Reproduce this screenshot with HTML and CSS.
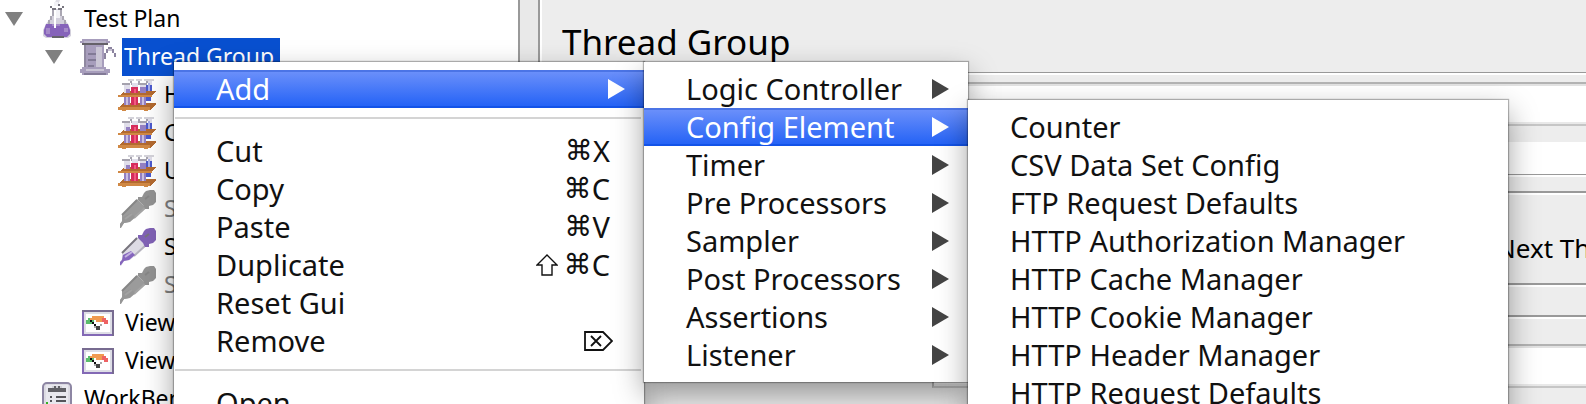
FILE: index.html
```html
<!DOCTYPE html>
<html lang="en">
<head>
<meta charset="utf-8">
<title>Test Plan</title>
<link rel="stylesheet" href="styles.css">
</head>
<body>
<svg class="defs" aria-hidden="true">
  <symbol id="twisty" viewBox="0 0 18 14"><path d="M0 0h18L9 14z" fill="#808080"/></symbol>
  <symbol id="arrow" viewBox="0 0 17 20"><path d="M0 0L17 10L0 20z" fill="currentColor"/></symbol>
  <symbol id="flask" viewBox="0 0 30 38">
    <path d="M14 0h4l-2 5h-4z" fill="#dedde4"/>
    <path d="M10 9h10v7l6 8 3 6v6l-3 2H4l-3-2v-6l3-6 6-8z" fill="#d3d0dc"/>
    <path d="M4 24h22l2 6v4l-3 3H5l-3-3v-4z" fill="#8663ba"/>
    <g shape-rendering="crispEdges">
      <path d="M8 6h2v2H8zM10 8h4v2h-4zM16 8h4v2h-4zM20 6h2v2h-2zM12 4h6v2h-6z" fill="#77757f"/>
      <path d="M12 2h4v4h-4zM14 10h4v8h-4z" fill="#f2f2f6"/>
      <path d="M10 10h2v6h-2zM8 16h2v4H8zM6 20h2v4H6zM18 10h2v6h-2zM20 16h2v4h-2zM22 20h2v4h-2z" fill="#aaa7b3"/>
      <path d="M4 28h4v6H4zM10 24h8v2h-8zM22 28h4v4h-4z" fill="#a58ac9"/>
      <path d="M12 10h2v18h-2z" fill="#fff"/>
      <path d="M10 36h12v2H10z" fill="#66636c"/>
    </g>
  </symbol>
  <symbol id="beaker" viewBox="0 0 36 36" shape-rendering="crispEdges">
    <path d="M2 0h26v2h2v2h-4v2h-2v22h2v2h4v4h-2v2H2v-2H0v-4h2v-2h2V6H2V4H0V2h2z" fill="#a79dbc"/>
    <path d="M4 2h22v2H4z" fill="#bab4ca"/>
    <path d="M2 4h26v2H2z" fill="#656169"/>
    <path d="M16 8h6v20h-6zM6 30h18v2H6z" fill="#cac5d5"/>
    <path d="M4 6h2v22H4z" fill="#8f88a0"/>
    <path d="M8 14h8v2H8zM8 20h8v2H8zM8 26h6v2H8zM4 34h22v2H4z" fill="#827a96"/>
    <path d="M28 8h4v2h-4zM26 10h2v4h-2zM32 10h2v4h-2zM34 14h2v4h-2zM24 14h2v6h-2z" fill="#8d85a0"/>
    <path d="M28 10h4v2h-4z" fill="#c8c3d2"/>
  </symbol>
  <symbol id="rack" viewBox="0 0 38 32" shape-rendering="crispEdges">
    <path d="M6 12h32l-6 6H0zM6 24h32v2l-6 5H0v-2z" fill="#b36a30"/>
    <path d="M0 16h34v2H0zM0 28h32v3H0zM4 30h4v2H4zM26 30h4v2h-4z" fill="#d08844"/>
    <path d="M10 0h6v2h-6zM18 0h6v2h-6zM26 0h10v2H26z" fill="#d4d3da"/>
    <path d="M4 4h8v2H4zM13 4h8v2h-8zM21 4h8v2h-8zM12 2h2v2h-2zM20 2h2v2h-2zM28 2h2v2h-2z" fill="#a5a2ae"/>
    <path d="M6 6h6v8H6zM14 4h6v4h-6zM22 6h6v6h-6zM30 2h4v4h-4z" fill="#e0deea"/>
    <path d="M8 10h4v4H8zM6 18h6v8H6zM22 8h6v6h-6zM22 18h6v8h-6z" fill="#9480c2"/>
    <path d="M8 18h2v8H8zM24 18h2v8h-2z" fill="#c9bfe2"/>
    <path d="M13 8h7v6h-7zM13 18h7v8h-7z" fill="#d62c5c"/>
    <path d="M16 10h2v4h-2zM16 18h2v8h-2z" fill="#ef5a80"/>
    <path d="M28 6h6v6h-6zM28 18h5v4h-5z" fill="#4b59cc"/>
    <path d="M30 4h2v8h-2z" fill="#a9b0e8"/>
  </symbol>
  <symbol id="dropper" viewBox="0 0 36 38">
    <path d="M17 9l9 9L10 32l-6 1-3 5H0v-4l2-3v-6z" fill="var(--glass)"/>
    <path d="M2 25L17 10" fill="none" stroke="var(--shade)" stroke-width="2"/>
    <path d="M26 17L14 28" fill="none" stroke="var(--edge)" stroke-width="2"/>
    <path d="M3 27l8-4 4 4-6 5-5 1-3 4H0v-3l2-2z" fill="var(--liquid)"/>
    <path d="M5 29l7-5" stroke="var(--light)" stroke-width="2"/>
    <path d="M26 1l4-1h4l2 3v9l-3 3-4 1v3h-4l-2-4-5-5V7h4l2-4z" fill="var(--bulb)"/>
    <path d="M25 9l4-3" stroke="var(--shade)" stroke-width="2"/>
  </symbol>
  <symbol id="gauge" viewBox="0 0 32 26" shape-rendering="crispEdges">
    <path d="M0 0h32v26H0z" fill="#8369b5"/><path d="M0 0h32v2H0zM30 0h2v26h-2z" fill="#776b90"/>
    <path d="M2 2h28v22H2z" fill="#dedee6"/><path d="M4 4h24v18H4z" fill="#fff"/>
    <path d="M4 10h2V8h4v2h2v4H4z" fill="#5bbd6c"/>
    <path d="M8 8h2V6h12v2h2v2h-4v2h-6v-2H8z" fill="#f09a50"/>
    <path d="M20 8h4v2h2v4h-4v-2h-2z" fill="#ee6264"/>
    <path d="M8 10h2v2H8zM10 12h2v2h-2zM12 14h2v2h-2z" fill="#111"/>
    <path d="M14 16h4v4h-4z" fill="#444"/><path d="M18 14h2v2h-2zM12 16h2v2h-2z" fill="#aaa"/>
  </symbol>
  <symbol id="clipboard" viewBox="0 0 30 38">
    <rect x="1" y="3" width="28" height="40" rx="4" fill="#dcdbe3" stroke="#8d86a3" stroke-width="2"/>
    <path d="M4 5h22v33H4z" fill="#e8e8ee"/>
    <g shape-rendering="crispEdges"><path d="M6 8h4V6h10v2h4v4H6z" fill="#606066"/><path d="M10 6h2v2h-2zM14 6h2v2h-2zM18 6h2v2h-2z" fill="#d0d0d6"/>
    <path d="M8 16h2v2H8zM14 16h10v2H14zM8 20h2v2H8zM14 20h10v2H14z" fill="#55555a"/><path d="M4 22h2v4H4z" fill="#34b324"/></g>
  </symbol>
</svg>
<div class="app">
  <nav class="tree" aria-label="Test plan tree">
    <div class="node"><svg class="twisty"><use href="#twisty"/></svg><svg class="icon tall"><use href="#flask"/></svg><span class="name">Test Plan</span></div>
    <div class="node level-1"><svg class="twisty"><use href="#twisty"/></svg><svg class="icon beaker"><use href="#beaker"/></svg><span class="name selected">Thread Group</span></div>
    <div class="node level-2"><svg class="icon rack"><use href="#rack"/></svg><span class="name">H</span></div>
    <div class="node level-2"><svg class="icon rack"><use href="#rack"/></svg><span class="name">C</span></div>
    <div class="node level-2"><svg class="icon rack"><use href="#rack"/></svg><span class="name">U</span></div>
    <div class="node level-2 disabled"><svg class="icon dropper"><use href="#dropper"/></svg><span class="name">S</span></div>
    <div class="node level-2"><svg class="icon dropper"><use href="#dropper"/></svg><span class="name">S</span></div>
    <div class="node level-2 disabled"><svg class="icon dropper"><use href="#dropper"/></svg><span class="name">S</span></div>
    <div class="node level-1 leaf"><svg class="icon gauge"><use href="#gauge"/></svg><span class="name">View</span></div>
    <div class="node level-1 leaf"><svg class="icon gauge"><use href="#gauge"/></svg><span class="name">View</span></div>
    <div class="node leaf"><svg class="icon tall"><use href="#clipboard"/></svg><span class="name">WorkBench</span></div>
  </nav>
  <div class="divider"></div>
  <main class="panel">
    <h1 class="title">Thread Group</h1>
    <input class="field" type="text" aria-label="Name">
    <div class="comments"></div>
    <section class="group action"><span class="choice">Next Th</span></section>
    <section class="properties"><input class="field" type="text" aria-label="Number of threads"></section>
  </main>
</div>

<div class="menu menu-main" role="menu">
  <button class="item active" role="menuitem">Add<svg class="arrow"><use href="#arrow"/></svg></button>
  <hr class="separator">
  <button class="item" role="menuitem">Cut<span class="keys"><span class="sign">⌘</span>X</span></button>
  <button class="item" role="menuitem">Copy<span class="keys"><span class="sign">⌘</span>C</span></button>
  <button class="item" role="menuitem">Paste<span class="keys"><span class="sign">⌘</span>V</span></button>
  <button class="item" role="menuitem">Duplicate<span class="keys"><svg class="shift" viewBox="0 0 22 22" role="img" aria-label="Shift"><path d="M11 1L21 11H16V21H6V11H1z" fill="none" stroke="currentColor" stroke-width="1.4"/></svg><span class="sign">⌘</span>C</span></button>
  <button class="item" role="menuitem">Reset Gui</button>
  <button class="item" role="menuitem">Remove<svg class="delete" viewBox="0 0 29 20" role="img" aria-label="Delete"><path d="M1 1H19L28 10L19 19H1zM7 5L17 15M17 5L7 15" fill="none" stroke="currentColor" stroke-width="1.8"/></svg></button>
  <hr class="separator">
  <button class="item" role="menuitem">Open...</button>
</div>

<div class="menu menu-add" role="menu">
  <button class="item" role="menuitem">Logic Controller<svg class="arrow"><use href="#arrow"/></svg></button>
  <button class="item active" role="menuitem">Config Element<svg class="arrow"><use href="#arrow"/></svg></button>
  <button class="item" role="menuitem">Timer<svg class="arrow"><use href="#arrow"/></svg></button>
  <button class="item" role="menuitem">Pre Processors<svg class="arrow"><use href="#arrow"/></svg></button>
  <button class="item" role="menuitem">Sampler<svg class="arrow"><use href="#arrow"/></svg></button>
  <button class="item" role="menuitem">Post Processors<svg class="arrow"><use href="#arrow"/></svg></button>
  <button class="item" role="menuitem">Assertions<svg class="arrow"><use href="#arrow"/></svg></button>
  <button class="item" role="menuitem">Listener<svg class="arrow"><use href="#arrow"/></svg></button>
</div>

<div class="menu menu-config" role="menu">
  <button class="item" role="menuitem">Counter</button>
  <button class="item" role="menuitem">CSV Data Set Config</button>
  <button class="item" role="menuitem">FTP Request Defaults</button>
  <button class="item" role="menuitem">HTTP Authorization Manager</button>
  <button class="item" role="menuitem">HTTP Cache Manager</button>
  <button class="item" role="menuitem">HTTP Cookie Manager</button>
  <button class="item" role="menuitem">HTTP Header Manager</button>
  <button class="item" role="menuitem">HTTP Request Defaults</button>
</div>
</body>
</html>
```
FILE: styles.css
```css
* { box-sizing: border-box; }
body {
  margin: 0;
  height: 100vh;
  overflow: hidden;
  position: relative;
  background: #ededed;
  color: #000;
  font-family: "Noto Sans", "Open Sans", sans-serif;
}
.defs { position: absolute; width: 0; height: 0; }
.app { display: flex; height: 100vh; overflow: hidden; }

.tree { flex: 0 0 518px; background: #fff; font-size: 23px; line-height: 36px; }
.node {
  --bulb: #8062b5; --shade: #77747d; --edge: #b5b3bd; --glass: #dddbe4; --liquid: #8565bd; --light: #c3b3e0;
  display: flex; align-items: center; height: 38px; padding-left: 5px;
}
.node.disabled {
  --bulb: #929292; --shade: #868686; --edge: #a5a5a5; --glass: #9b9b9b; --liquid: #969696; --light: #a2a2a2;
  color: #808080;
}
.level-1 { padding-left: 45px; }
.level-2 { padding-left: 118px; }
.node.leaf { padding-left: 42px; }
.node.level-1.leaf { padding-left: 82px; }
.twisty { flex: none; width: 18px; height: 14px; margin-right: 19px; }
.level-1 .twisty { margin-right: 17px; }
.icon { flex: none; display: block; }
.tall { width: 30px; height: 38px; margin-right: 10px; }
.beaker { width: 36px; height: 36px; margin-right: 6px; }
.rack { width: 38px; height: 32px; margin-right: 6px; }
.dropper { width: 36px; height: 38px; margin: 0 6px 0 2px; }
.gauge { width: 32px; height: 26px; margin-right: 9px; }
.name { height: 38px; padding: 0 2px; white-space: nowrap; }
.selected { background: #0850d0; color: #fff; padding-right: 6px; }

.divider { flex: 0 0 24px; background: #e9e9e9; border-left: 2px solid #999; border-right: 2px solid #fff; box-shadow: inset -2px 0 #999; }

.panel { flex: 1; display: flex; flex-direction: column; min-width: 0; overflow: hidden; }
.title { margin: 0; height: 75px; padding: 16px 20px 0; border-bottom: 2px solid #fff; box-shadow: inset 0 -1px #999; font-size: 35px; font-weight: 400; line-height: 52px; }
.field { display: block; width: 100%; height: 44px; flex: none; padding: 0 8px; border: 2px solid #b3b3b3; border-bottom-color: #c6c6c6; border-right: 0; background: #fff; box-shadow: inset 0 2px #e2e2e2, inset 0 -2px #e9e9e9; font: inherit; }
.panel > .field { margin: 7px 0 16px 380px; }
.comments { flex: none; height: 35px; background: #fff; border-bottom: 2px solid #fff; box-shadow: inset 0 -1px #999; }
.group { flex: none; margin-top: 14px; height: 96px; border-top: 2px solid #999; border-bottom: 2px solid #fff; box-shadow: inset 0 2px #fff, inset 0 -2px #999; }
.action { overflow: hidden; padding: 37px 0 0 954px; }
.choice { font-size: 26px; line-height: 36px; white-space: nowrap; }
.properties { flex: none; margin-top: 28px; padding: 27px 0 0 390px; border-top: 2px solid #999; box-shadow: inset 0 2px #fff; }

.menu { position: absolute; padding: 8px 0; background: #fff; box-shadow: 0 0 1px 1px rgba(0,0,0,.28), 0 12px 28px rgba(0,0,0,.38); }
.menu-main { left: 174px; top: 62px; width: 470px; }
.menu-add { left: 644px; top: 62px; width: 324px; }
.menu-config { left: 968px; top: 100px; width: 540px; }
.item {
  display: flex; align-items: center; justify-content: space-between;
  width: 100%; height: 38px; padding: 0 19px 0 42px;
  border: 0; background: none; color: #111;
  font-family: inherit; font-size: 29px; line-height: 38px; text-align: left; white-space: nowrap;
}
.item.active { color: #fff; background: linear-gradient(#4b74e6 0 2px, #6a8ffa 2px, #2563f6 36px, #1353e8 36px); }
.arrow { width: 17px; height: 20px; color: #444; }
.active .arrow { color: #fff; }
.separator { height: 2px; margin: 9px 3px 13px 1px; border: 0; background: #d4d4d4; }
.keys { display: flex; align-items: center; padding-right: 15px; }
.sign { font-family: "DejaVu Sans", sans-serif; font-size: 28px; }
.shift { width: 22px; height: 22px; margin-right: 6px; }
.delete { width: 29px; height: 20px; margin-right: 12px; }
```
